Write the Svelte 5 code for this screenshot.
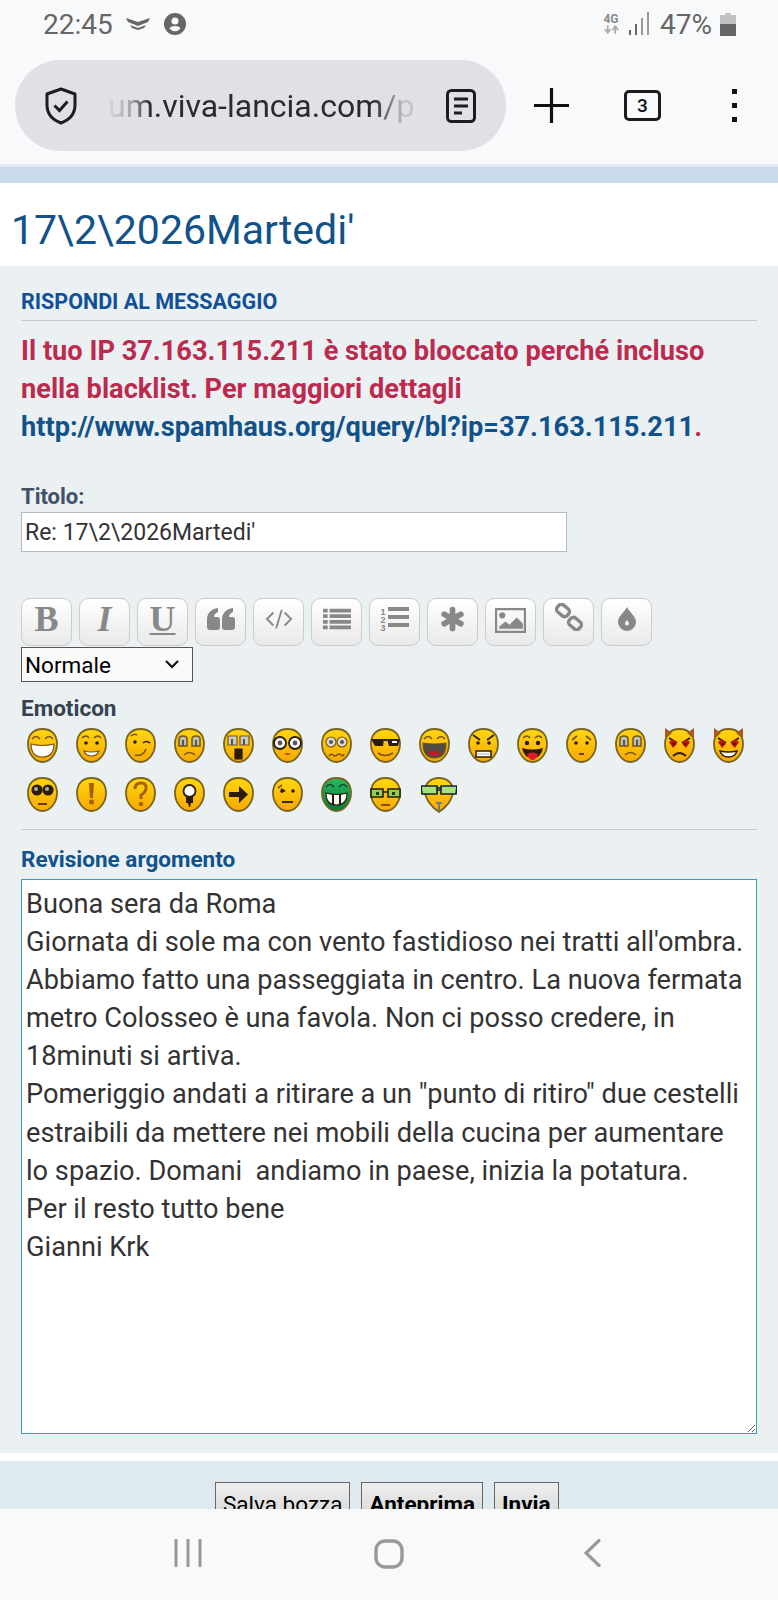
<script>
  const c = (x, y, r) => `M${x - r} ${y}a${r} ${r} 0 1 0 ${2 * r} 0a${r} ${r} 0 1 0 ${-2 * r} 0Z`;
  const K = '#2a1c08', W = '#fff', G = '#9aa0a0', R = '#c81010', B = '#7a5410';
  const f = (d, fill = K) => ({ d, fill, stroke: 'none', w: 0 });
  const s = (d, stroke = K, w = 1.6) => ({ d, fill: 'none', stroke, w });
  const fs = (d, fill, stroke = K, w = 1.2) => ({ d, fill, stroke, w });
  const dots = (y = 15, r = 1.8) => [f(c(10, y, r)), f(c(21, y, r))];
  const browsUp = [s('M6 10q4-4 7 0', B), s('M18 10q4-4 7 0', B)];
  const grayEyes = [fs('M5 11q0-3 4-3t4 3v7H5Z', '#b9bfb8', B, 1.5), fs('M18 11q0-3 4-3t4 3v7h-8Z', '#b9bfb8', B, 1.5), f('M8 12h2v6H8Z M21 12h2v6h-2Z', '#555')];
  const frown = s('M10 27q5.500-5 11 0', B, 1.6);
  const horns = [f('M1 0l7 5-7 6Z', '#a85a18'), f('M30 0l-7 5 7 6Z', '#a85a18')];
  const redEyes = [s('M5 10l8 5M26 10l-8 5', K, 2), f('M5 14l4-3 4 5-4 4Z', R), f('M26 14l-4-3-4 5 4 4Z', R), f(c(9.500, 16, 1.2), K), f(c(21.500, 16, 1.2), K)];
  const glasses = [fs('M1 12h12v8H1Z', '#8fcf4a', K, 1.6), fs('M18 12h12v8H18Z', '#8fcf4a', K, 1.6), s('M13 15h5', K, 1.6), f('M6 15h3v3H6ZM22 15h3v3h-3Z', '#1d3a10')];

  const row1 = [
    [s('M5 11q4-5 8 0', B), s('M18 11q4-5 8 0', B), fs('M4 16q11.500 3 23 0q0 13-11.500 13T4 16Z', W, B)],
    [...browsUp, ...dots(15), fs('M8 23q7.500 2 15 0q-2 5-7.500 5T8 23Z', W, B)],
    [s('M6 8q3-3 6-1', B), f(c(10, 14, 1.8)), s('M18 15q3-3 7 0', K), s('M10 27q8 2 11-6', B)],
    [...grayEyes, frown],
    [fs('M5 8h9v9H5Z', '#c9cdc6', B), fs('M17 8h9v9h-9Z', '#c9cdc6', B), f('M8 11h2v6H8ZM20 11h2v6h-2Z', '#555'), fs('M12 21h7v10h-7Z', K, K)],
    [fs(c(8, 15, 6), W, K, 1.8), fs(c(23, 15, 6), W, K, 1.8), f(c(8, 15, 2.4), '#555'), f(c(23, 15, 2.4), '#555'), f('M12 26q3.500-2 7 0q-3.500 2-7 0Z', '#b24a10')],
    [fs(c(10, 14, 5), '#d8dcd0', B), fs(c(21, 14, 5), '#d8dcd0', B), f(c(10, 14, 2), '#555'), f(c(21, 14, 2), '#555'), s('M8 28q2-3 4-1t4 0 4 0 3-1', B)],
    [f('M1 11h13l-1 7H5ZM17 11h13l-2 7h-9Z M14 11h3v2h-3Z', K), f('M22 13h5v2h-5Z', W), s('M8 25q7 5 15 0', B)],
    [s('M5 11q4-5 8 0', B), s('M18 11q4-5 8 0', B), fs('M4 15q11.500 2 23 0q0 15-11.500 15T4 15Z', '#4f4b46', B), f('M9 25q6-4 13 0q-6 6-13 0Z', '#c81828')],
    [s('M5 7l7 5M26 7l-7 5', K, 1.8), ...dots(15, 1.8), fs('M8 23h15v6H8Z', W, K, 1.6), s('M8 26h15', '#999', 0.8)],
    [...browsUp, ...dots(15, 2.2), f('M5 20q10.500 3 21 0q-2 10-10.500 10T5 20Z', K), f('M10 26q5-3 11 0q-2 6-5.500 6T10 26Z', '#e01830')],
    [s('M6 12l5-4M25 12l-5-4', B, 1.8), f(c(10, 15, 1.8)), f(c(21, 15, 1.8)), f('M13 25h5v2h-5Z', '#6a3a10')],
    [...grayEyes, frown],
    [...horns, ...redEyes, s('M9 28q6.500-6 13 0', K, 1.8)],
    [...horns, ...redEyes, fs('M7 23q8.500 2 17 0q-2 6-8.500 6T7 23Z', W, K, 1.4)]
  ];
  const row2 = [
    [fs(c(10, 13, 5), K, K), fs(c(21, 13, 5), K, K), f(c(9, 12, 2), '#aaa'), f(c(20, 12, 2), '#aaa'), f('M11 26h9v2h-9Z', '#6a3a10')],
    [f('M13 6h5l-1 15h-3Z', '#a86008'), f(c(15.500, 25, 2.500), '#a86008')],
    [s('M10 12q0-6 6-6t5 6q-1 4-5 6v4', '#a86008', 3), f(c(16, 27, 2.300), '#a86008')],
    [fs(c(15.500, 14, 6), W, K, 1.8), f('M12 20h7v6h-2l-1 4h-1l-1-4h-2Z', K)],
    [f('M6 15h10V9l9 8.500-9 8.500v-6H6Z', K)],
    [s('M6 11l4-3', B), f(c(10, 14, 1.8)), f('M9 11l5 3-5 2Z', K), f(c(21, 14, 1.8)), s('M10 25h11', K, 1.8)],
    [s('M5 10q4-5 8 0', '#0a4a24'), s('M18 10q4-5 8 0', '#0a4a24'), fs('M5 16q10.500 3 21 0q0 12-10.500 12T5 16Z', W, K), f('M11 17h2v11h-2ZM18 17h2v11h-2Z', K)],
    [...glasses, f('M11 27h9v2h-9Z', '#8a4a10')]
  ];
  const buttons = ['B','I','U','quote','code','ul','ol','star','img','link','drop'];
  const text = `Buona sera da Roma
Giornata di sole ma con vento fastidioso nei tratti all'ombra. Abbiamo fatto una passeggiata in centro. La nuova fermata metro Colosseo è una favola. Non ci posso credere, in 18minuti si artiva.
Pomeriggio andati a ritirare a un "punto di ritiro" due cestelli estraibili da mettere nei mobili della cucina per aumentare lo spazio. Domani  andiamo in paese, inizia la potatura.
Per il resto tutto bene
Gianni Krk`;
</script>

{#snippet face(parts, fill)}
  <svg class="smiley" viewBox="0 0 31 35" aria-hidden="true">
    <path d="M15.500 1C25 1 30 7 30 16C30 26 23 34 15.500 34C8 34 1 26 1 16C1 7 6 1 15.500 1Z" fill={fill} stroke="#7a6420" stroke-width="1.800"/>
    {#each parts as p}
      <path d={p.d} fill={p.fill} stroke={p.stroke} stroke-width={p.w}/>
    {/each}
  </svg>
{/snippet}

<div class="screen">
  <header class="chrome">
    <div class="status">
      <span class="time">22:45</span>
      <svg class="hide" viewBox="0 0 26 14"><path d="M1 1l12 4 12-4-2 4-10 4L3 5Z M5 8l8 3 8-3-2 3-6 2-6-2Z" fill="#666"/></svg>
      <svg class="acct" viewBox="0 0 22 22"><path fill="#666" fill-rule="evenodd" d="M11 0a11 11 0 1 0 0 22a11 11 0 1 0 0-22ZM11 4.500a3.500 3.500 0 1 1 0 7a3.500 3.500 0 1 1 0-7ZM11 13c3 0 5 1.200 5.500 2.500A7 7 0 0 1 5.500 15.500C6 14.200 8 13 11 13Z"/></svg>
      <span class="grow"></span>
      <span class="net"><b>4G</b><svg viewBox="0 0 18 9" class="arrows"><path d="M5 0v6M2 4l3 4 3-4M13 9V3M10 5l3-4 3 4" stroke="#aaa" stroke-width="1.800" fill="none"/></svg></span>
      <svg class="sig" viewBox="0 0 20 24"><path d="M0 18h2v5H0ZM6 12h2v11H6Z" fill="#666"/><path d="M12 6h2v17h-2ZM18 0h2v23h-2Z" fill="#999"/></svg>
      <span class="pct">47%</span>
      <svg class="bat" viewBox="0 0 16 23"><path d="M5 0h6v2h5v9H0V2h5Z" fill="#c2c2c2"/><path d="M0 11h16v12H0Z" fill="#666"/></svg>
    </div>
    <div class="urlrow">
      <div class="pill">
        <svg class="shield" viewBox="0 0 34 38"><path d="M17 2l14 5v11c0 9-6 15-14 18C9 33 3 27 3 18V7Z" fill="none" stroke="#1d1d1f" stroke-width="3" stroke-linejoin="round"/><path d="M10.500 18.500l5 5 8-9" fill="none" stroke="#1d1d1f" stroke-width="3"/></svg>
        <span class="url">um.viva-lancia.com/p</span>
        <svg class="reader" viewBox="0 0 30 34"><rect x="1.500" y="1.500" width="27" height="31" rx="4" fill="none" stroke="#1d1d1f" stroke-width="3"/><path d="M8 10h14M8 17h14M8 24h8" stroke="#1d1d1f" stroke-width="3"/></svg>
      </div>
      <svg class="plus" viewBox="0 0 35 35"><path d="M17.500 0v35M0 17.500h35" stroke="#111" stroke-width="3.200"/></svg>
      <span class="tabs">3</span>
      <span class="menu"><i></i><i></i><i></i></span>
    </div>
  </header>
  <div class="band"></div>

  <main class="page">
    <h2 class="title">17\2\2026Martedi'</h2>
    <section class="panel">
      <h3 class="head">RISPONDI AL MESSAGGIO</h3>
      <p class="error">Il tuo IP 37.163.115.211 è stato bloccato perché incluso nella blacklist. Per maggiori dettagli <a href="#top">http://www.spamhaus.org/query/bl?ip=37.163.115.211</a>.</p>
      <label class="lab" for="t">Titolo:</label>
      <input id="t" class="subject" value="Re: 17\2\2026Martedi'" />
      <div class="toolbar">
        {#each buttons as b}
          <span class="tb">
            {#if b === 'B'}<b class="let">B</b>
            {:else if b === 'I'}<b class="let it">I</b>
            {:else if b === 'U'}<b class="let un">U</b>
            {:else if b === 'quote'}<svg viewBox="0 0 28 22"><path fill="#888" d="M0 12C0 5 4 1 11 0v4c-3 1-4 3-4 5h3q3 0 3 3v7q0 3-3 3H3q-3 0-3-3ZM15 12c0-7 4-11 11-12v4c-3 1-4 3-4 5h3q3 0 3 3v7q0 3-3 3h-7q-3 0-3-3Z"/></svg>
            {:else if b === 'code'}<svg viewBox="0 0 30 22"><path fill="none" stroke="#888" stroke-width="2" d="M9 4l-7 7 7 7M21 4l7 7-7 7M18 1l-6 20"/></svg>
            {:else if b === 'ul'}<svg viewBox="0 0 30 24"><path fill="#888" d="M0 1h5v4H0ZM7 1h23v4H7ZM0 7h5v4H0ZM7 7h23v4H7ZM0 13h5v4H0ZM7 13h23v4H7ZM0 19h5v4H0ZM7 19h23v4H7Z"/></svg>
            {:else if b === 'ol'}<span class="ol"><span class="nums">1<br/>2<br/>3</span><svg viewBox="0 0 21 22"><path fill="#888" d="M0 1h21v4H0ZM0 9h21v4H0ZM0 17h21v4H0Z"/></svg></span>
            {:else if b === 'star'}<svg class="st" viewBox="0 0 24 24"><path stroke="#888" stroke-width="5.500" stroke-linecap="round" d="M12 3v18M4 7.500l16 9M20 7.500l-16 9"/></svg>
            {:else if b === 'img'}<svg class="ph" viewBox="0 0 30 24"><path fill="none" stroke="#888" stroke-width="2.200" d="M1 1h28v22H1Z"/><circle cx="7" cy="7" r="3" fill="#888"/><path fill="#888" d="M4 20v-2l6-5 4 3 7-7 6 6v5Z"/></svg>
            {:else if b === 'link'}<svg class="lk" viewBox="0 0 28 28"><g fill="none" stroke="#888" stroke-width="3.400"><rect x="1.500" y="3" width="13" height="9" rx="3.500" transform="rotate(40 8 7.500)"/><rect x="13.500" y="16" width="13" height="9" rx="3.500" transform="rotate(40 20 20.500)"/></g></svg>
            {:else}<svg class="dr" viewBox="0 0 18 24"><path fill="#888" fill-rule="evenodd" d="M9 0c2 5 9 9 9 15a9 9 0 0 1-18 0C0 9 7 5 9 0ZM9 13c-1 1.500-2 2-2 3.500a2 2 0 0 0 4 0C11 15 10 14.500 9 13Z"/></svg>
            {/if}
          </span>
        {/each}
      </div>
      <select class="size"><option>Normale</option></select>
      <div class="lab emo">Emoticon</div>
      <div class="smileys">
        {#each row1 as parts}{@render face(parts, 'url(#gy)')}{/each}
        {#each row2 as parts, i}{@render face(parts, i === 6 ? 'url(#gg)' : 'url(#gy)')}{/each}
        <svg class="smiley wide" viewBox="0 0 36 37" aria-hidden="true">
          <path d="M18 2C26 2 32 7 32 15C32 24 24 32 18 36C12 32 4 24 4 15C4 7 10 2 18 2Z" fill="url(#gy)" stroke="#7a6420" stroke-width="1.800"/>
          <path d="M0 10h16v8H1ZM20 10h16l-1 8H20Z M16 12h4v2h-4Z" fill="#a8e080" stroke="#123" stroke-width="1.600"/>
          <path d="M15 26h6v2h-2v7h-2v-7h-2Z" fill="#777"/>
        </svg>
      </div>
      <svg class="defs" width="0" height="0"><defs>
        <linearGradient id="gy" x1="0" y1="0" x2="0" y2="1"><stop offset="0" stop-color="#ffd810"/><stop offset="1" stop-color="#f8a800"/></linearGradient>
        <linearGradient id="gg" x1="0" y1="0" x2="0" y2="1"><stop offset="0" stop-color="#30b860"/><stop offset="1" stop-color="#007a3c"/></linearGradient>
      </defs></svg>
      <div class="rev">Revisione argomento</div>
      <textarea class="msg" value={text}></textarea>
    </section>
    <section class="actions">
      <button>Salva bozza</button>
      <button class="strong">Anteprima</button>
      <button class="strong">Invia</button>
    </section>
  </main>

  <nav class="nav">
    <svg class="n1" viewBox="0 0 28 28"><path d="M2 1v26M14 1v26M26 1v26" stroke="#999" stroke-width="3" stroke-linecap="round"/></svg>
    <svg class="n2" viewBox="0 0 30 30"><rect x="2" y="2" width="26" height="26" rx="9" fill="none" stroke="#999" stroke-width="3.400"/></svg>
    <svg class="n3" viewBox="0 0 17 28"><path d="M15 1.500L2 14l13 12.500" fill="none" stroke="#999" stroke-width="3.200" stroke-linecap="round"/></svg>
  </nav>
</div>

<style>
  :global(body) { margin: 0; background: #fff; }
  .screen { width: 778px; height: 1600px; overflow: hidden; display: flex; flex-direction: column; font-family: Roboto, "Liberation Sans", sans-serif; }
  .chrome { height: 164px; flex: none; background: #f8f9fb; box-sizing: border-box; }
  .status { height: 60px; box-sizing: border-box; padding: 0 42px 12px 43px; display: flex; align-items: center; color: #666; }
  .time { font-size: 28px; margin-right: 12px; }
  .hide { width: 26px; height: 14px; margin-right: 13px; }
  .acct { width: 22px; height: 22px; }
  .grow { flex: 1; }
  .net { width: 20px; display: flex; flex-direction: column; align-items: center; margin-right: 8px; }
  .net b { font-size: 12px; line-height: 11px; color: #888; }
  .arrows { width: 17px; height: 9px; }
  .sig { width: 20px; height: 24px; margin-right: 11px; }
  .pct { font-size: 28px; margin-right: 8px; }
  .bat { width: 16px; height: 23px; }
  .urlrow { display: flex; align-items: center; padding-left: 15px; }
  .pill { width: 491px; height: 91px; border-radius: 46px; background: #e0e0e6; display: flex; align-items: center; box-sizing: border-box; padding-left: 29px; }
  .shield { width: 34px; height: 38px; flex: none; }
  .url { width: 309px; margin-left: 30px; font-size: 32px; white-space: nowrap; overflow: hidden; color: #2b2b2e; -webkit-mask-image: linear-gradient(90deg, rgba(0,0,0,.05) 0, rgba(0,0,0,.3) 7%, #000 14%, #000 86%, rgba(0,0,0,.15) 96%); mask-image: linear-gradient(90deg, rgba(0,0,0,.05) 0, rgba(0,0,0,.3) 7%, #000 14%, #000 86%, rgba(0,0,0,.15) 96%); }
  .reader { width: 30px; height: 34px; flex: none; margin-left: 29px; }
  .plus { width: 35px; height: 35px; margin-left: 28px; }
  .tabs { width: 37px; height: 31px; box-sizing: border-box; border: 3px solid #1c1c1c; border-radius: 5px; margin-left: 55px; font-size: 19px; font-weight: 500; line-height: 25px; text-align: center; color: #111; }
  .menu { display: flex; flex-direction: column; gap: 9px; margin-left: 71px; }
  .menu i { width: 5px; height: 5px; background: #111; display: block; }
  .band { height: 19px; flex: none; box-sizing: border-box; background: #c9dbea; border-top: 3px solid #e4ebf2; }
  .page { flex: 1; min-height: 0; overflow: hidden; }
  .title { margin: 0; height: 83px; box-sizing: border-box; padding: 22px 0 0 11px; font-size: 41px; line-height: 50px; font-weight: 400; color: #105289; background: #fff; }
  .panel { background: #ebf0f3; padding: 23px 21px 18px; height: 1187px; box-sizing: border-box; }
  .head { margin: 0; padding-bottom: 6px; border-bottom: 1px solid #c4ccd2; font-size: 21.500px; line-height: 25px; color: #115098; font-weight: 700; }
  .error { margin: 11px 0 0; font-size: 27.200px; line-height: 38px; font-weight: 700; color: #bc2a4d; }
  .error a { color: #105289; text-decoration: none; }
  .lab { display: block; font-size: 22px; line-height: 26px; font-weight: 700; color: #425067; }
  label.lab { margin-top: 38px; }
  .subject { display: block; width: 546px; height: 40px; margin-top: 2px; box-sizing: border-box; border: 1px solid #b4bac0; background: #fff; padding: 0 3px; font: 400 23px Roboto, sans-serif; color: #333; outline: none; border-radius: 0; }
  .toolbar { display: flex; gap: 7px; margin-top: 46px; }
  .tb { width: 51px; height: 48px; box-sizing: border-box; border: 1.500px solid #cbcbcb; border-radius: 9px; background: linear-gradient(#fff, #e9e9e9); display: flex; align-items: center; justify-content: center; }
  .tb svg { width: 28px; height: 24px; }
  .let { font-family: "Liberation Serif", serif; font-size: 36px; line-height: 1; color: #888; margin-top: -6px; }
  .it { font-style: italic; }
  .un { text-decoration: underline; text-decoration-thickness: 2px; text-underline-offset: 2px; }
  .ol { display: flex; align-items: center; gap: 2px; margin-top: -4px; }
  .ol .nums { font: 700 9px/8px "Liberation Sans", sans-serif; color: #888; }
  .tb .ol svg { width: 21px; height: 22px; }
  .tb .st { width: 25px; height: 26px; margin-top: -6px; }
  .tb .ph { width: 31px; height: 25px; margin-top: -4px; }
  .tb .lk { width: 28px; height: 28px; margin-top: -10px; }
  .tb .dr { width: 18px; height: 24px; margin-top: -6px; }
  .tb svg:not(.st):not(.ph):not(.lk):not(.dr) { margin-top: -6px; }
  .size { display: block; width: 172px; height: 35px; margin-top: 1px; box-sizing: border-box; border: 1px solid #555; font: 400 22.500px Roboto, sans-serif; color: #000; border-radius: 0; padding: 0 0 0 3px; appearance: none; -webkit-appearance: none; background: #fafafa url("data:image/svg+xml,%3Csvg xmlns='http://www.w3.org/2000/svg' width='14' height='9'%3E%3Cpath d='M1 1l6 6 6-6' fill='none' stroke='%23111' stroke-width='2.200'/%3E%3C/svg%3E") no-repeat right 13px center; }
  .emo { margin-top: 13px; color: #37424f; font-size: 22.500px; }
  .smileys { display: grid; grid-template-columns: repeat(15, 31px); column-gap: 18px; row-gap: 14px; margin: 7px 0 0 6px; }
  .smiley { width: 31px; height: 35px; display: block; filter: blur(.35px); }
  .wide { width: 36px; height: 37px; justify-self: center; margin: -1px 0 0 8px; }
  .defs { position: absolute; }
  .rev { margin-top: 16px; padding-top: 16px; border-top: 1px solid #c4ccd2; font-size: 22.500px; line-height: 26px; font-weight: 700; color: #105289; }
  .msg { display: block; width: 736px; height: 555px; margin-top: 7px; box-sizing: border-box; border: 1.500px solid #3a9cc0; background: #fff; padding: 5px 10px 5px 4px; font: 400 27.200px/38.100px Roboto, sans-serif; color: #333; border-radius: 0; outline: none; resize: both; }
  .actions { margin-top: 8px; padding-top: 21px; height: 90px; box-sizing: border-box; background: #dee9f0; display: flex; justify-content: flex-start; gap: 11px; padding-left: 215px; align-items: flex-start; }
  button { height: 44px; padding: 0 7px; border: 1px solid #666; background: linear-gradient(#efefef, #d2d2d2); font: 400 22.500px Roboto, sans-serif; color: #000; border-radius: 0; }
  .strong { font-weight: 700; }
  .nav { height: 91px; flex: none; background: #f8f9fb; position: relative; z-index: 1; display: flex; align-items: flex-start; padding: 30px 0 0 174px; box-sizing: border-box; }
  .n1 { width: 28px; height: 28px; }
  .n2 { width: 30px; height: 30px; margin-left: 172px; }
  .n3 { width: 17px; height: 28px; margin-left: 180px; }
</style>
